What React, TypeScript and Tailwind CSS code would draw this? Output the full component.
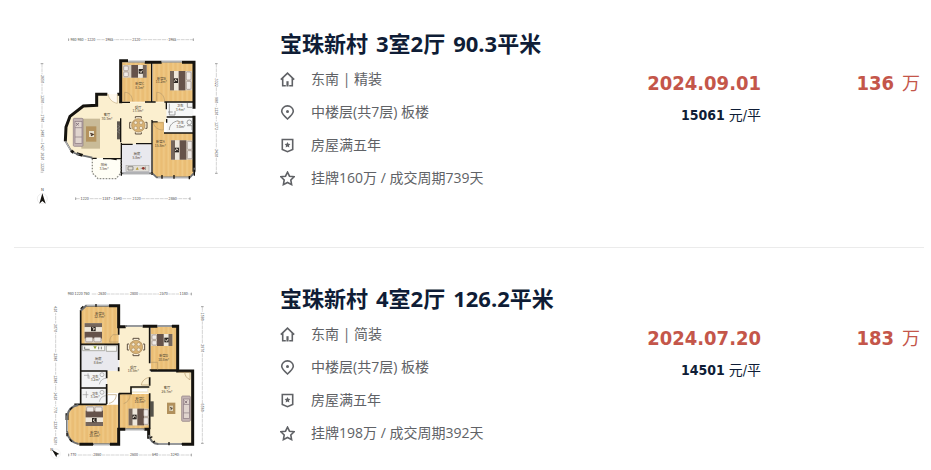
import type { ReactNode } from 'react'

interface Listing {
  id: number
  title: string[]
  facing: string
  floor: string
  years: string
  deal: string
  date: string
  unitPrice: string
  total: string
  plan: ReactNode
}

const WALL = '#15130f'
const WOOD = '#ecc17a'
const CREAM = '#fbefcf'
const TILE = '#e9e9ee'

function Label({ x, y, name, area }: { x: number; y: number; name: string; area: string }) {
  return (
    <g fill="#4d4230" fontSize="10" textAnchor="middle">
      <text x={x} y={y}>{name}</text>
      <text x={x} y={y + 11}>{area}</text>
    </g>
  )
}

// Bed seen from above, head on the right; rotate for the other directions
function Bed({ x, y, w = 66, h = 58, turn = 0 }: { x: number; y: number; w?: number; h?: number; turn?: number }) {
  return (
    <g transform={`translate(${x} ${y}) rotate(${turn})`}>
      <rect x={-w / 2} y={-h / 2} width={w} height={h} fill="#d9d0c4" />
      <rect x={-w / 2} y={-h / 2} width={12} height={h} fill="#75665c" />
      <rect x={-w / 2 + 12} y={-h / 2} width={14} height={h} fill="#eee7db" />
      <rect x={-w / 2 + 26} y={-h / 2} width={20} height={h} fill="#65524a" />
      <rect x={-w / 2 + 11} y={-7} width={13} height={14} fill="#2b2522" />
      <path d={`M${-w / 2 + 13} 3l4-7 4 5`} fill="none" stroke="#e9dfcf" strokeWidth="3" />
      <rect x={w / 2 - 17} y={-h / 2 + 3} width={14} height={h / 2 - 5} rx="3" fill="#efeae6" stroke="#85736b" strokeWidth="1.5" />
      <rect x={w / 2 - 17} y={2} width={14} height={h / 2 - 5} rx="3" fill="#efeae6" stroke="#85736b" strokeWidth="1.5" />
    </g>
  )
}

function DiningTable({ x, y }: { x: number; y: number }) {
  return (
    <g transform={`translate(${x} ${y})`}>
      <g fill="#faf0dc" stroke="#5e503f" strokeWidth="3">
        <path d="M-9-21v-5h18v5M-9 21v5h18v-5M-21-9h-5v18h5M21-9h5v18h-5" />
      </g>
      <circle r="20" fill="#d9b273" stroke="#a5875b" strokeWidth="2" />
      <g fill="#f5ead3" stroke="#9c8058" strokeWidth="1.5">
        <circle cx="-8" cy="-8" r="5" />
        <circle cx="8" cy="-8" r="5" />
        <circle cx="-8" cy="8" r="5" />
        <circle cx="8" cy="8" r="5" />
      </g>
    </g>
  )
}

function Sofa({ x, y, w = 26, h = 84 }: { x: number; y: number; w?: number; h?: number }) {
  return (
    <g transform={`translate(${x} ${y})`} stroke="#8a7880" strokeWidth="2">
      <rect width={w} height={h} rx="3" fill="#c5b5b4" />
      <rect x="5" y="9" width={w - 8} height={h - 18} fill="#e0d4ce" />
      <path d={`M5 ${h / 3}h${w - 8}M5 ${(h / 3) * 2}h${w - 8}`} />
      <path d="M8 14l8 7M8 22l9-8" strokeWidth="3" />
    </g>
  )
}

// Dimension line with its numbers; vertical ones are turned a quarter
function Dims({ x, y, length, marks, vertical = false }: { x: number; y: number; length: number; marks: [number, string][]; vertical?: boolean }) {
  return (
    <g transform={`translate(${x} ${y}) rotate(${vertical ? 90 : 0})`}>
      <path d={`M0 0H${length}`} stroke="#a9a9a9" strokeWidth="1.5" strokeDasharray="12 2" />
      <path d={`M0-4v8M${length}-4v8`} stroke="#777" strokeWidth="2" />
      {marks.map(([at, text]) => (
        <g key={at}>
          <rect x={at - text.length * 3 - 2} y="-5" width={text.length * 6 + 4} height="10" fill="#fff" />
          <text x={at} y="4" fontSize="11" fill="#444" textAnchor="middle">{text}</text>
        </g>
      ))}
    </g>
  )
}

function WoodPattern({ id }: { id: string }) {
  return (
    <pattern id={id} width="14" height="40" patternUnits="userSpaceOnUse">
      <rect width="14" height="40" fill={WOOD} />
      <path d="M3 0v40" stroke="#e6b769" strokeWidth="2" />
      <path d="M9 0v40" stroke="#f1cb89" strokeWidth="3" />
    </pattern>
  )
}

function ThreeRoomPlan() {
  return (
    <svg viewBox="0 0 600 570" className="h-auto w-full" role="img" fontFamily='"Noto Sans CJK SC", sans-serif'>
      <defs>
        <WoodPattern id="woodThree" />
      </defs>
      <Dims x={116} y={44} length={374} marks={[[25, '980 980'], [68, '1220'], [122, '1965'], [203, '2120'], [311, '1965']]} />
      <Dims x={137} y={521} length={343} marks={[[27, '1220'], [92, '1187'], [126, '1540'], [183, '2120'], [291, '2860']]} />
      <Dims x={36} y={116} length={325} vertical marks={[[46, '2650'], [106, '1290'], [164, '1780'], [209, '1485'], [249, '1427'], [278, '1620'], [310, '1220']]} />
      <Dims x={559} y={116} length={329} vertical marks={[[57, '3322'], [109, '980'], [143, '1230'], [187, '1272'], [268, '3430']]} />

      <path d="M200 208h72v24h138v58h-44v68h-94v42h-86l-38-9-28-18-12-26v-32l12-40 40-31h40z" fill={CREAM} />
      <path d="M274 112h90v118h-90zM368 112h124v118H368zM368 290h34v34h90v121l-12 13H380l-12-13z" fill="url(#woodThree)" />
      <path d="M275 358h89v87h-89z" fill={TILE} />
      <path d="M410 232h80v43h-80zM410 279h80v42h-80z" fill="#f6f7f7" />
      <path d="M185 400h87v45l-14 17h-53l-20-17z" fill="#fffef5" />

      <rect x="154" y="281" width="56" height="90" fill="#c9bb98" />
      <rect x="168" y="304" width="31" height="46" fill="#b4935e" />
      <rect x="177" y="318" width="15" height="18" fill="#e9e2cd" />
      <path d="M181 325l8 3-6 4" stroke="#473326" strokeWidth="4" fill="none" />
      <Sofa x={130} y={280} w={29} />
      <rect x="261" y="289" width="10" height="54" fill="#5c564f" />
      <path d="M262 300l8 5-8 5 8 5-8 5 8 5" stroke="#aaa" fill="none" />
      <DiningTable x={325} y={301} />
      <Bed x={314} y={139} w={72} h={38} turn={180} />
      <Bed x={453} y={167} />
      <Bed x={456} y={375} />

      <g stroke={WALL} strokeWidth="9" fill="none">
        <path d="M232 208h-32v33l-40 2-40 31-12 32-2 43" />
        <path d="M272 235V107h22M344 112h51M456 112h40M492 107v144M492 272v168M262 208h10" />
        <path d="M123 377l8 6M140 386l18 5" />
      </g>
      <g stroke={WALL} strokeWidth="4" fill="none">
        <path d="M365 112v118M274 232h26M345 231h32M403 231h87M409 231v22M410 276h80M410 282v11M402 324h88M366 285v158M366 291h17M274 354v90M274 358h34M318 356h46M272 280v72M185 400h15M219 401h53M242 401l18 3" />
      </g>
      <g stroke="#6c6e70" strokeWidth="5" fill="none">
        <path d="M294 110h50M395 110h61M274 445h90M106 348l17 29M131 383l17 6M159 392l28 6" />
        <path d="M367 445l13 12h100l13-14v-15" />
      </g>
      <g stroke="#e8eaec" strokeWidth="2" fill="none">
        <path d="M294 110h50M395 110h61M280 445h78M107 350l14 24M384 457h92" />
      </g>
      <path d="M187 401v43l17 17h54l14-16v-44" fill="none" stroke="#8e8e88" strokeWidth="4" strokeDasharray="5 4" />
      <path d="M274 440v12M366 441v9M396 450v11M432 450v11M478 453v10M493 434v18" stroke={WALL} strokeWidth="4" />

      <g fill="#fffaf0" stroke="#b79a6b" strokeWidth="1.5">
        <path d="M262 207v28c-15-3-25-12-28-28" />
      </g>
      <g fill="none" stroke="#b79a6b" strokeWidth="2">
        <path d="M284 229v-27c13 0 22 8 24 27M380 229v-27c13 0 22 8 24 27M370 293h30v22c-16 0-27-8-30-22" />
      </g>
      <g fill="none" stroke="#777" strokeWidth="2">
        <path d="M418 236v34h17v-12M418 315c0-16 12-25 27-28M472 234v13h14M471 302h15v13M414 261h14" />
        <circle cx="478" cy="292" r="7" />
      </g>
      <rect x="288" y="421" width="69" height="18" fill="#e2dfd8" stroke="#999" strokeWidth="1.5" />
      <path d="M294 425v10h15v-10zM332 430h6M346 425v10" stroke="#666" strokeWidth="2" fill="none" />
      <path d="M317 434l5-8 4 8z" fill="#b69b33" />
      <circle cx="340" cy="430" r="4" fill="#8f332a" />

      <Label x={231} y={273} name="客厅" area="30.3m²" />
      <Label x={324} y={251} name="餐厅" area="13.5m²" />
      <Label x={329} y={181} name="卧室C" area="8.1m²" />
      <Label x={394} y={164} name="卧室B" area="11.2m²" />
      <Label x={391} y={354} name="卧室A" area="15.8m²" />
      <Label x={451} y={246} name="卫生" area="3.4m²" />
      <Label x={452} y={298} name="卫生" area="3.0m²" />
      <Label x={321} y={391} name="厨房" area="5.8m²" />
      <Label x={222} y={423} name="阳台" area="3.5m²" />

      <text x="37" y="498" fontSize="12" textAnchor="middle" fill="#333">N</text>
      <circle cx="37" cy="521" r="15" fill="none" stroke="#ccc" />
      <path d="M37 505l10 31-10-8-9 8z" fill={WALL} />
    </svg>
  )
}

function FourRoomPlan() {
  return (
    <svg viewBox="0 0 600 570" className="h-auto w-full" role="img" fontFamily='"Noto Sans CJK SC", sans-serif'>
      <defs>
        <WoodPattern id="woodFour" />
      </defs>
      <Dims x={116} y={42} length={368} marks={[[30, '980 1220 760'], [101, '2630'], [196, '2800'], [285, '2570'], [345, '1180']]} />
      <Dims x={116} y={525} length={368} marks={[[14, '770'], [86, '2860'], [196, '2600'], [259, '640'], [318, '3240']]} />
      <Dims x={77} y={80} length={412} vertical marks={[[8, '420'], [64, '3070'], [152, '2380'], [218, '1380'], [269, '1420'], [310, '770'], [356, '2330'], [400, '620']]} />
      <Dims x={517} y={80} length={410} vertical marks={[[30, '1580'], [125, '3970'], [303, '6560']]} />

      <path d="M152 92l16-15h98v115H152zM362 140h80v132h-80zM152 374h114v120H145c-19-4-30-17-33-37v-50c3-20 16-31 40-33zM270 342h88v105h-88z" fill="url(#woodFour)" />
      <path d="M268 140h92v135h126v217H382c-13-3-21-11-24-23V340h-90v-1h-38v-67h38z" fill={CREAM} />
      <path d="M270 342h88v105h-88z" fill="url(#woodFour)" />
      <path d="M152 194h114v78H152z" fill={TILE} />
      <path d="M152 276h78v46h-78zM152 327h78v45h-78z" fill="#f3f4f5" />

      <Bed x={190} y={159} w={59} h={52} turn={90} />
      <Bed x={193} y={408} w={60} h={52} turn={-90} />
      <Bed x={327} y={411} w={62} h={50} />
      <Bed x={395} y={180} w={64} h={36} turn={180} />
      <DiningTable x={318} y={201} />
      <rect x="411" y="368" width="25" height="34" fill="#b1905c" />
      <rect x="418" y="377" width="11" height="16" fill="#ddd4bb" />
      <path d="M420 383l7 2-5 4" stroke="#3d2d22" strokeWidth="3" fill="none" />
      <Sofa x={455} y={348} h={76} />
      <rect x="361" y="364" width="10" height="46" fill="#54514a" />

      <g stroke={WALL} strokeWidth="9" fill="none">
        <path d="M237 77h29v63h21M338 139h44M426 139h17v134h45v220h-32M148 493h41M240 493h26v-45h20M343 448h13v28M111 400v20" />
      </g>
      <g stroke={WALL} strokeWidth="5" fill="none">
        <path d="M152 90v284M152 193h114M266 140v24M266 190v50M266 262v12M152 273h78v22M230 312v60M152 324h78M133 373h97M267 340v152M267 341h36v-20h55M359 140v110M359 270h83M359 292v25M359 340v108M362 273h82" />
      </g>
      <path d="M152 92l16-15h69M287 138h51M382 138h44M145 375c-20 3-31 15-34 34v45c3 20 14 34 35 38M189 493h51M286 448h57M357 465c3 15 13 26 27 27h72" stroke="#6c6e70" strokeWidth="6" fill="none" />
      <path d="M170 76h66M290 138h46M384 138h40M112 420v33M192 493h46M288 448h53M385 492h68" stroke="#edf0f1" strokeWidth="2" fill="none" />
      <path d="M120 389l7-7M111 459v10M119 478l7 7M360 474l7-4M369 487l6-4M417 486v10M152 86l8-7M198 72v8" stroke={WALL} strokeWidth="4" />

      <g fill="none" stroke="#b79a6b" strokeWidth="2">
        <path d="M264 164h-15c-7 5-10 12-10 22h25M231 344h28c-1 14-9 23-22 26M274 344h27c-1 14-9 23-20 27M358 292c-14 3-22 11-24 23h24M363 247h20v22M445 277h35v22c-10-4-15-12-16-22" />
      </g>
      <g fill="none" stroke="#9a9a9a" strokeWidth="2">
        <path d="M162 286h15v11M174 280v15M158 344h17M169 334v20M208 313c3-12 10-17 20-18M208 365c3-12 10-17 20-18" />
        <circle cx="216" cy="284" r="6" />
        <circle cx="216" cy="337" r="6" />
      </g>
      <path d="M158 196h66v16h-66zM229 197h31v17h-31z" fill="#f8f8f4" stroke="#8e8e85" strokeWidth="2" />
      <path d="M164 200v8h15M206 200v8M214 200v8" stroke="#444" strokeWidth="2" fill="none" />
      <path d="M190 199l5 9 5-9z" fill="#93a32c" />
      <path d="M306 326h47v9h-47z" fill="#fff" stroke="#ccb" />

      <Label x={209} y={104} name="卧室B" area="12.9m²" />
      <Label x={205} y={240} name="厨房" area="8.6m²" />
      <Label x={196} y={293} name="卫生" area="3.2m²" />
      <Label x={195} y={344} name="卫生" area="3.1m²" />
      <Label x={310} y={266} name="餐厅" area="18.5m²" />
      <Label x={401} y={231} name="卧室D" area="10.8m²" />
      <Label x={330} y={359} name="卧室C" area="10.8m²" />
      <Label x={411} y={327} name="客厅" area="26.7m²" />
      <Label x={194} y={461} name="卧室A" area="18.5m²" />

      <text x="65" y="512" fontSize="12" textAnchor="middle" fill="#333">N</text>
      <circle cx="77" cy="521" r="14" fill="none" stroke="#ddd" />
      <path d="M66 509l22 13-7 2-2 8z" fill={WALL} />
    </svg>
  )
}

const LISTINGS: Listing[] = [
  {
    id: 1,
    title: ['宝珠新村', '3室2厅', '90.3平米'],
    facing: '东南 | 精装',
    floor: '中楼层(共7层) 板楼',
    years: '房屋满五年',
    deal: '挂牌160万 / 成交周期739天',
    date: '2024.09.01',
    unitPrice: '15061',
    total: '136',
    plan: <ThreeRoomPlan />,
  },
  {
    id: 2,
    title: ['宝珠新村', '4室2厅', '126.2平米'],
    facing: '东南 | 简装',
    floor: '中楼层(共7层) 板楼',
    years: '房屋满五年',
    deal: '挂牌198万 / 成交周期392天',
    date: '2024.07.20',
    unitPrice: '14501',
    total: '183',
    plan: <FourRoomPlan />,
  },
]

const ICONS = {
  house: (
    <>
      <path d="M.8 7.6 7.5 1.2l6.7 6.4M2.7 6.2v7.6h3.1M12.3 6.2v7.6H9.2" />
      <path d="M7.5 9.2v5.3" strokeWidth="2.2" />
    </>
  ),
  pin: (
    <>
      <path d="M7.5 14C4 10.900 1.700 8.700 1.700 6.300a5.800 5.400 0 0 1 11.600 0c0 2.400-2.300 4.600-5.800 7.700z" />
      <circle cx="7.5" cy="6.4" r="1.5" fill="currentColor" stroke="none" />
    </>
  ),
  badge: (
    <>
      <path d="M2.3 1.5h10.4v10l-5.2 2.2-5.2-2.2z" />
      <path d="m7.5 4 .9 1.8 2 .3-1.4 1.4.3 2-1.8-.9-1.8.9.3-2-1.4-1.4 2-.3z" fill="currentColor" stroke="none" />
    </>
  ),
  star: <path d="m7.5 1.2 2 4 4.6.6-3.3 3.2.8 4.6-4.1-2.1-4.1 2.1.8-4.6L.9 5.8l4.6-.6z" />,
}

function InfoLine({ icon, text }: { icon: keyof typeof ICONS; text: string }) {
  return (
    <li className="flex items-center gap-4">
      <svg viewBox="0 0 15 15" className="size-[15px] shrink-0" fill="none" stroke="currentColor" strokeWidth="1.6" aria-hidden="true">
        {ICONS[icon]}
      </svg>
      <span>{text}</span>
    </li>
  )
}

function ListingRow({ item }: { item: Listing }) {
  return (
    <article className="flex border-b border-[#ebebeb] py-8 pl-4 group-first:pt-[25px] group-last:border-b-0 group-last:pb-0">
      <div className="w-[200px] shrink-0">{item.plan}</div>
      <div className="ml-[50px] min-w-0 flex-1">
        <h2 className="mt-0.5 flex gap-2 text-[22px] font-bold leading-8 text-[#0f1d36]">
          {item.title.map((part) => (
            <span key={part}>{part}</span>
          ))}
        </h2>
        <ul className="mt-2 flex flex-col gap-[9px] text-sm leading-6 text-[#606266]">
          <InfoLine icon="house" text={item.facing} />
          <InfoLine icon="pin" text={item.floor} />
          <InfoLine icon="badge" text={item.years} />
          <InfoLine icon="star" text={item.deal} />
        </ul>
      </div>
      <div className="mt-[42px] flex-none text-right font-['DejaVu_Sans_Condensed','DejaVu_Sans','Noto_Sans_CJK_SC',sans-serif]">
        <p className="text-xl font-bold leading-8 text-[#c4564a]">{item.date}</p>
        <p className="mt-0.5 text-sm leading-7 text-[#0f1d36]">
          <b>{item.unitPrice}</b> 元/平
        </p>
      </div>
      <p className="mt-[42px] w-[163px] flex-none pr-1 text-right font-['DejaVu_Sans_Condensed','DejaVu_Sans','Noto_Sans_CJK_SC',sans-serif] text-xl font-bold leading-8 text-[#c4564a]">
        {item.total}
        <span className="ml-2 text-lg font-normal leading-8">万</span>
      </p>
    </article>
  )
}

export default function App() {
  return (
    <main className="overflow-hidden bg-white pl-[14px] pr-[7px] font-['Open_Sans','Noto_Sans_CJK_SC',sans-serif]">
      <ul>
        {LISTINGS.map((item) => (
          <li key={item.id} className="group">
            <ListingRow item={item} />
          </li>
        ))}
      </ul>
    </main>
  )
}
